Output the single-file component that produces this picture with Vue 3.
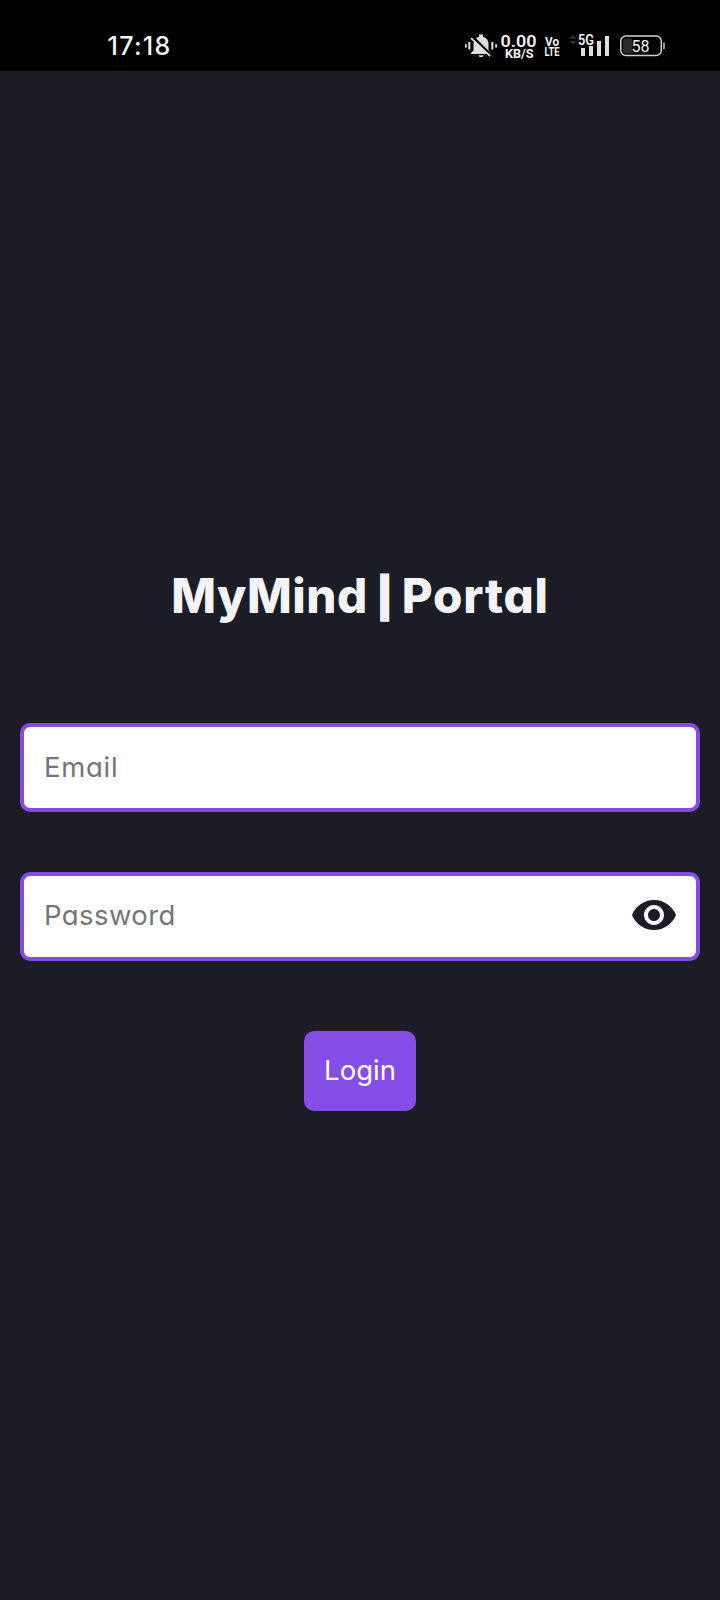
<script setup>
import { ref } from 'vue'

const email = ref('')
const password = ref('')
const visible = ref(false)
const bars = [
  { x: 581, y: 48 },
  { x: 589, y: 46 },
  { x: 597, y: 41 },
  { x: 605, y: 36 },
]
</script>

<template>
  <div class="screen">
    <header class="status">
      <time class="clock">17:18</time>
      <svg class="indicators" width="210" height="30" viewBox="460 31 210 30">
        <g fill="#dedede">
          <path d="M479 34.5h4v2.200c3.600.9 5.500 3.700 5.500 7.300v6.500l2.500 2.500v1h-20v-1l2.500-2.500v-6.500c0-3.600 1.900-6.400 5.500-7.300zM478.300 55.300h5.400c-.4 1.300-1.400 2-2.700 2s-2.300-.7-2.700-2z" />
          <path d="M465 44.300h1.800v3.200H465zM468.300 42h2v7.500h-2zM491.300 42h2v7.500h-2zM495.200 44.300h1.800v3.200h-1.800z" />
        </g>
        <path d="M472.500 36.700l18.500 18.500" stroke="#000" stroke-width="2.600" />
        <path d="M471 38.200l19.200 18" stroke="#dedede" stroke-width="1.800" />
        <g class="glyphs" fill="#f2f2f2">
          <text x="500.500" y="46.800" font-size="17" font-weight="600" textLength="36" lengthAdjust="spacingAndGlyphs">0.00</text>
          <text x="505" y="57.500" font-size="12" font-weight="700" textLength="28.500" lengthAdjust="spacingAndGlyphs">KB/S</text>
          <text x="545" y="45.700" font-size="13.500" font-weight="700" textLength="14" lengthAdjust="spacingAndGlyphs">Vo</text>
          <text x="544.500" y="56" font-size="12.500" font-weight="700" textLength="15" lengthAdjust="spacingAndGlyphs">LTE</text>
          <text x="578" y="45" font-size="14" font-weight="600" textLength="16" lengthAdjust="spacingAndGlyphs">5G</text>
        </g>
        <path d="M569.500 38.700l3.500-3.700 3.500 3.700zM569.500 41l3.500 3.700 3.500-3.700z" fill="#333" />
        <rect v-for="bar in bars" :key="bar.x" :x="bar.x" :y="bar.y" width="4" :height="56 - bar.y" fill="#dedede" />
        <rect x="623" y="38.500" width="9" height="15" rx="2" fill="#2b2b2b" />
        <rect x="620.800" y="36" width="40.500" height="19.500" rx="5" fill="none" stroke="#cfcfcf" stroke-width="1.500" />
        <path d="M664 42.500v6.500" stroke="#cfcfcf" stroke-width="1.500" />
        <text class="glyphs" x="631.500" y="51.700" font-size="16" font-weight="400" fill="#f2f2f2" textLength="18" lengthAdjust="spacingAndGlyphs">58</text>
      </svg>
    </header>

    <form class="login" @submit.prevent>
      <h1 class="title"><span class="brand">MyMind</span><span class="divider">|</span><span class="portal">Portal</span></h1>
      <label class="field">
        <input v-model="email" class="email" type="text" placeholder="Email" />
      </label>
      <label class="field">
        <input v-model="password" class="password" :type="visible ? 'text' : 'password'" placeholder="Password" />
        <button class="toggle" type="button" aria-label="Show password" @click="visible = !visible">
          <svg width="48" height="48" viewBox="0 0 24 24">
            <path fill="#1c1c26" d="M12 4.500C7 4.500 2.730 7.610 1 12c1.730 4.390 6 7.500 11 7.500s9.270-3.110 11-7.500c-1.730-4.390-6-7.500-11-7.500zM12 17c-2.760 0-5-2.240-5-5s2.240-5 5-5 5 2.240 5 5-2.240 5-5 5zm0-8c-1.660 0-3 1.340-3 3s1.340 3 3 3 3-1.340 3-3-1.340-3-3-3z" />
          </svg>
        </button>
      </label>
      <button class="submit" type="submit">Login</button>
    </form>
  </div>
</template>

<style>
body {
  margin: 0;
  background: #1c1c26;
}
</style>

<style scoped>
.screen {
  height: 1600px;
  overflow: hidden;
  background: #1c1c26;
  font-family: Inter, "Open Sans", sans-serif;
  font-feature-settings: "cv11";
}
.status {
  height: 71px;
  box-sizing: border-box;
  padding: 31px 50px 0 107.5px;
  display: flex;
  justify-content: space-between;
  align-items: flex-start;
  background: #000;
}
.clock {
  color: #f5f5f5;
  font-size: 25px;
  font-weight: 500;
  line-height: 30px;
  letter-spacing: 1.300px;
  font-feature-settings: normal;
}
.glyphs {
  font-family: Roboto, sans-serif;
}
.login {
  display: flex;
  flex-direction: column;
  align-items: center;
  padding: 489px 20px 0;
}
.title {
  display: flex;
  align-items: center;
  height: 72px;
  margin: 0 0 91px;
  color: #f3f4f8;
  font-size: 47.5px;
  font-weight: 800;
  line-height: 72px;
}
.brand {
  letter-spacing: 0.500px;
}
.divider {
  width: 34px;
  padding-top: 3px;
  font-size: 39px;
  font-weight: 900;
  text-align: center;
  -webkit-text-stroke: 1.500px #f3f4f8;
}
.portal {
  letter-spacing: 0.800px;
}
.field {
  display: flex;
  align-items: center;
  justify-content: space-between;
  box-sizing: border-box;
  width: 680px;
  height: 89px;
  margin-bottom: 60px;
  padding: 0 18px 3px 20px;
  border: 4px solid #854ce0;
  border-radius: 10px;
  background: #fff;
}
input {
  min-width: 0;
  flex: 1;
  height: 60px;
  padding: 0;
  border: 0;
  outline: 0;
  background: transparent;
  color: #1c1c26;
  font: inherit;
  font-size: 27.5px;
  font-weight: 375;
}
.email {
  padding-top: 2px;
  letter-spacing: 0.700px;
}
.password {
  letter-spacing: 0.400px;
}
input::placeholder {
  color: #757575;
  opacity: 1;
}
.toggle {
  width: 48px;
  height: 48px;
  padding: 0;
  border: 0;
  background: none;
}
.toggle svg {
  display: block;
}
.submit {
  width: 112px;
  height: 80px;
  margin-top: 10px;
  padding: 0 0 2px;
  border: 0;
  border-radius: 10px;
  background: #854ce6;
  color: #fff;
  font: inherit;
  font-size: 27.5px;
  font-weight: 400;
}
</style>
